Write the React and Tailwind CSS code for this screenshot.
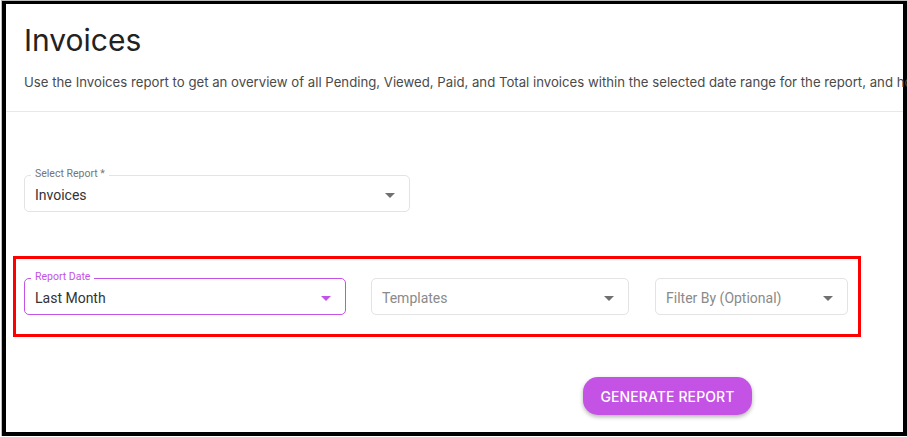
import React from "react";

const PURPLE = "#c452e4";

function Caret({ color }) {
  return (
    <svg width="10" height="5" viewBox="0 0 10 5" className="shrink-0">
      <path d="M0 0 L10 0 L5 5 Z" fill={color} />
    </svg>
  );
}

function SelectField({ label, value, placeholder, width, focused }) {
  const borderCls = focused
    ? "border-[1.5px] border-[#c452e4]"
    : "border border-[#e3e3e3]";
  return (
    <div className={`relative h-[37px] rounded-[5px] bg-white ${borderCls}`} style={{ width }}>
      {label && (
        <span
          className={`absolute -top-[9px] left-[6px] bg-white px-[4px] text-[10.5px] leading-[14px] ${
            focused ? "text-[#c452e4]" : "text-[#757575]"
          }`}
        >
          {label}
        </span>
      )}
      <div className="flex h-full items-center justify-between pl-[10px] pr-[14px] pt-[3px]">
        <span
          className={`text-[14px] leading-none ${
            value ? "text-[#333333]" : "text-[#8a8a8a]"
          }`}
        >
          {value || placeholder}
        </span>
        <Caret color={focused ? PURPLE : "#707070"} />
      </div>
    </div>
  );
}

export default function App() {
  return (
    <div
      className="h-[437px] w-[907px] overflow-hidden bg-white pl-[1px]"
      style={{ fontFamily: "Roboto, 'Liberation Sans', sans-serif" }}
    >
      <div className="h-[436px] w-[906px] border-t border-l border-[#bdbdbd]">
        <div className="h-[435px] w-[905px] border-[4px] border-t-[3px] border-black bg-white">
          <div className="pl-[18px] pt-[16px]" style={{ fontFamily: "Inter, 'Liberation Sans', sans-serif" }}>
            <h1 className="text-[30px] leading-[40px] font-normal text-[#222222]">Invoices</h1>
            <p className="mt-[12px] whitespace-nowrap text-[13.2px] leading-[20px] text-[#4a4a4a]">
              Use the Invoices report to get an overview of all Pending, Viewed, Paid, and Total invoices within the selected date range for the report, and how they compare over time.
            </p>
          </div>
          <div className="mt-[19px] h-px w-full bg-[#e8e8e8]" />

          <div className="ml-[18px] mt-[63px]">
            <SelectField label="Select Report *" value="Invoices" width={386} />
          </div>

          <div className="ml-[7px] mt-[44px] h-[81px] w-[848px] border-[3px] border-[#ff0000] pl-[8px] pt-[19px]">
            <div className="flex items-start gap-[25px]">
              <SelectField label="Report Date" value="Last Month" width={322} focused />
              <SelectField placeholder="Templates" width={258} />
              <div className="ml-[1px]">
                <SelectField placeholder="Filter By (Optional)" width={193} />
              </div>
            </div>
          </div>

          <div className="ml-[577px] mt-[40px]">
            <button
              className="h-[38px] w-[169px] rounded-[15px] bg-[#c452e4] text-[14px] font-medium tracking-[0.1px] text-white shadow-[0_2px_4px_rgba(0,0,0,0.3)]"
              style={{ fontFamily: "Inter, 'Liberation Sans', sans-serif" }}
            >
              GENERATE REPORT
            </button>
          </div>
        </div>
      </div>
    </div>
  );
}
